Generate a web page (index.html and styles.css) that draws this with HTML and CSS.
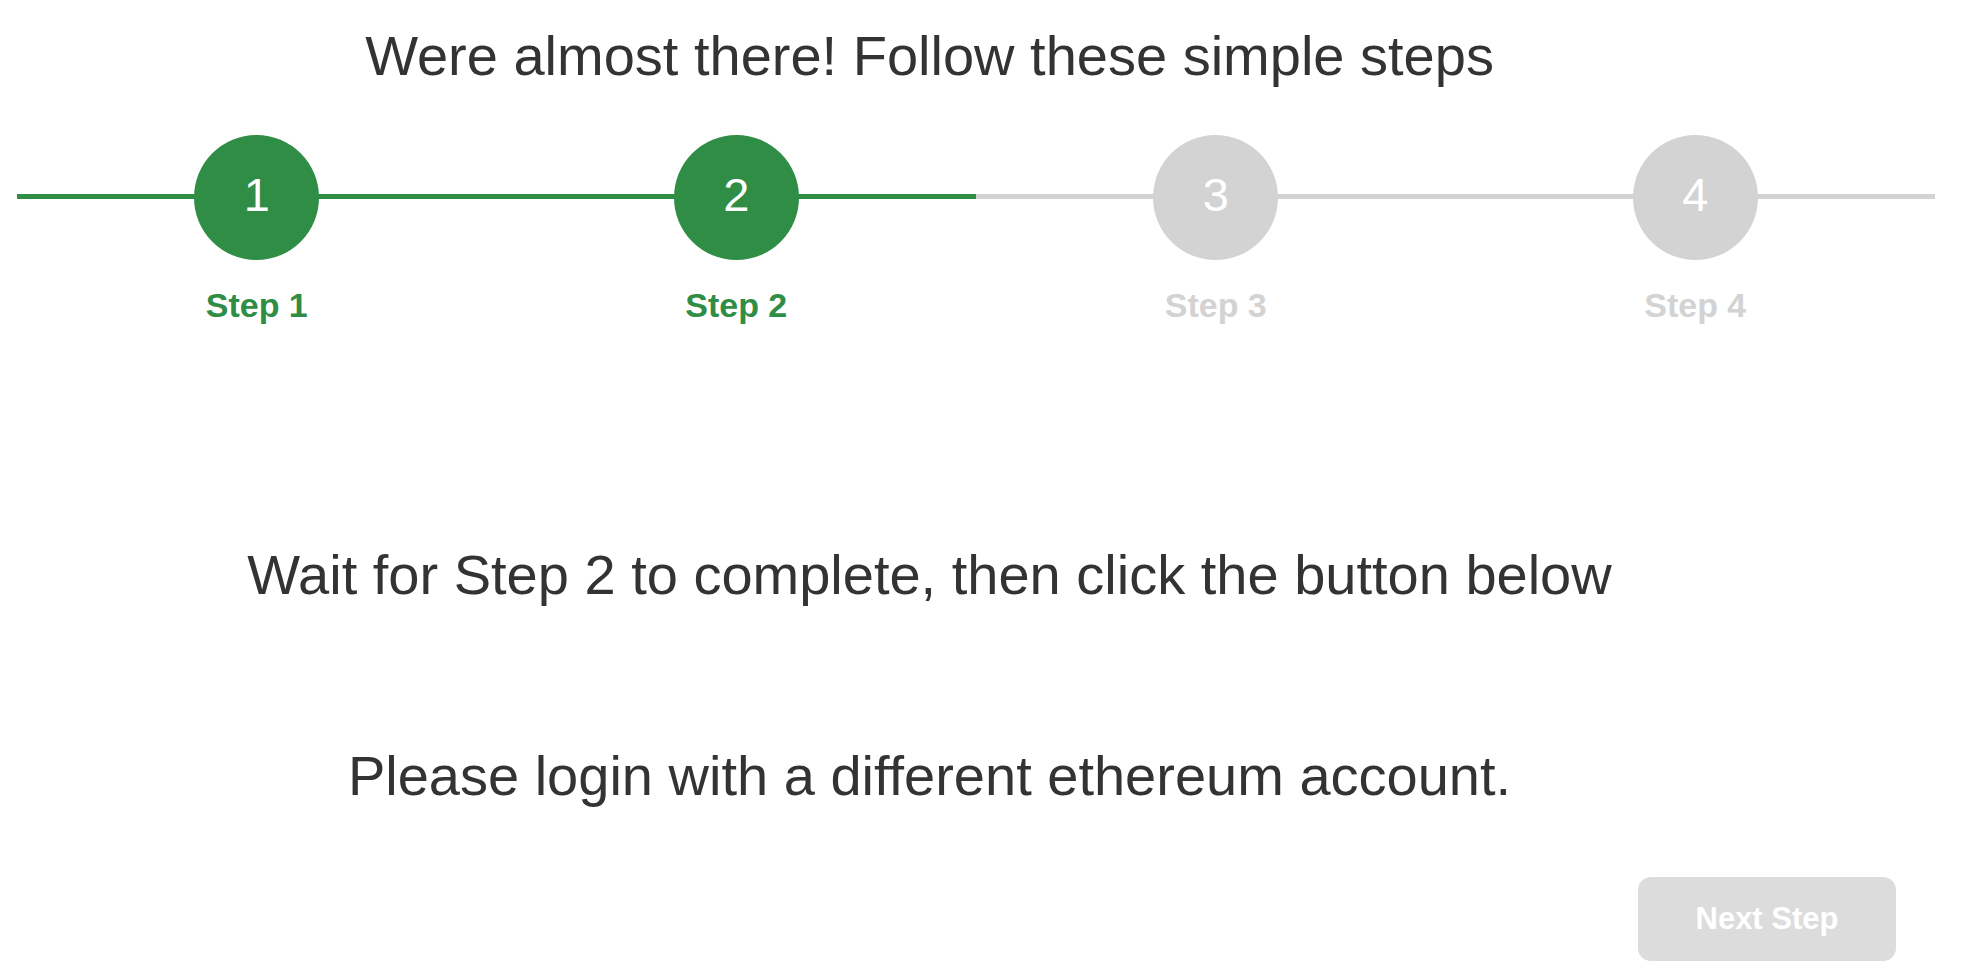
FILE: index.html
```html
<!DOCTYPE html>
<html lang="en">
<head>
    <meta charset="UTF-8">
    <meta name="viewport" content="width=device-width, initial-scale=1.0">
    <title>Steps</title>
    <link rel="stylesheet" href="styles.css">
</head>
<body>
    <div class="wizard">
        <h1 class="title">Were almost there! Follow these simple steps</h1>

        <div class="stepper">
            <div class="step done">
                <div class="circle">1</div>
                <div class="label">Step 1</div>
            </div>
            <div class="step done">
                <div class="circle">2</div>
                <div class="label">Step 2</div>
            </div>
            <div class="step">
                <div class="circle">3</div>
                <div class="label">Step 3</div>
            </div>
            <div class="step">
                <div class="circle">4</div>
                <div class="label">Step 4</div>
            </div>
        </div>

        <p class="message wait">Wait for Step 2 to complete, then click the button below</p>
        <p class="message login">Please login with a different ethereum account.</p>

        <div class="actions">
            <button class="next" disabled>Next Step</button>
        </div>
    </div>
</body>
</html>
```

FILE: styles.css
```css
body {
    margin: 0;
    font-family: "Liberation Sans", Arial, sans-serif;
    background: #fff;
    color: #333;
}
.wizard {
    padding: 0 29px 0 17px;
}
.title {
    margin: 24px 93px 0 0;
    font-size: 56px;
    line-height: 64px;
    font-weight: normal;
    text-align: center;
}
.stepper {
    display: flex;
    margin-top: 47px;
    background: linear-gradient(to right, #308d46 50%, #d3d3d3 50%) 0 59px / 100% 5px no-repeat;
}
.step {
    flex: 1;
    display: flex;
    flex-direction: column;
    align-items: center;
}
.circle {
    box-sizing: border-box;
    width: 125px;
    height: 125px;
    padding-bottom: 7px;
    border-radius: 50%;
    background: #d3d3d3;
    color: #fff;
    font-size: 47px;
    display: flex;
    justify-content: center;
    align-items: center;
}
.label {
    margin-top: 25px;
    font-size: 34px;
    line-height: 40px;
    font-weight: bold;
    color: #d3d3d3;
}
.step.done .circle {
    background: #308d46;
}
.step.done .label {
    color: #308d46;
}
.message {
    margin: 0 93px 0 0;
    font-size: 56px;
    line-height: 64px;
    text-align: center;
}
.wait {
    margin-top: 218px;
}
.login {
    margin-top: 137px;
}
.actions {
    display: flex;
    justify-content: flex-end;
    margin-top: 69px;
    padding-right: 39px;
}
.next {
    width: 258px;
    height: 84px;
    border: none;
    border-radius: 13px;
    background: #dcdcdc;
    color: #fff;
    font-family: inherit;
    font-size: 31px;
    font-weight: bold;
}
```
